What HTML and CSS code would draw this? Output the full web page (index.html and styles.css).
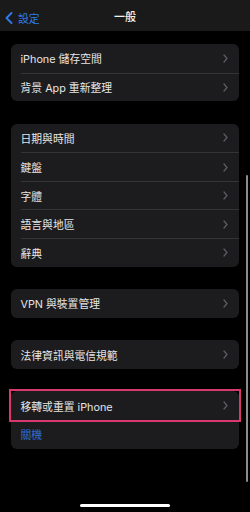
FILE: index.html
```html
<!DOCTYPE html>
<html lang="zh-Hant">
<head>
    <meta charset="UTF-8">
    <meta name="viewport" content="width=device-width, initial-scale=1.0">
    <title>一般</title>
    <link rel="stylesheet" href="styles.css">
</head>
<body>
    <div class="screen">
        <header class="nav">
            <a class="back" href="#">
                <svg class="back-icon" width="8" height="12" viewBox="0 0 8 12"><path d="M6.5 1 L1.5 6 L6.5 11" fill="none" stroke="#2f7cf0" stroke-width="1.8" stroke-linecap="round" stroke-linejoin="round"/></svg>
                <span>設定</span>
            </a>
            <h1 class="title">一般</h1>
        </header>

        <div class="content">
            <div class="group">
                <div class="row"><div class="row-body"><span>iPhone 儲存空間</span><svg class="chev" width="5" height="9" viewBox="0 0 5 9"><path d="M1 1 L4 4.5 L1 8" fill="none" stroke="#5b5b60" stroke-width="1.3" stroke-linecap="round" stroke-linejoin="round"/></svg></div></div>
                <div class="row"><div class="row-body"><span>背景 App 重新整理</span><svg class="chev" width="5" height="9" viewBox="0 0 5 9"><path d="M1 1 L4 4.5 L1 8" fill="none" stroke="#5b5b60" stroke-width="1.3" stroke-linecap="round" stroke-linejoin="round"/></svg></div></div>
            </div>

            <div class="group">
                <div class="row"><div class="row-body"><span>日期與時間</span><svg class="chev" width="5" height="9" viewBox="0 0 5 9"><path d="M1 1 L4 4.5 L1 8" fill="none" stroke="#5b5b60" stroke-width="1.3" stroke-linecap="round" stroke-linejoin="round"/></svg></div></div>
                <div class="row"><div class="row-body"><span>鍵盤</span><svg class="chev" width="5" height="9" viewBox="0 0 5 9"><path d="M1 1 L4 4.5 L1 8" fill="none" stroke="#5b5b60" stroke-width="1.3" stroke-linecap="round" stroke-linejoin="round"/></svg></div></div>
                <div class="row"><div class="row-body"><span>字體</span><svg class="chev" width="5" height="9" viewBox="0 0 5 9"><path d="M1 1 L4 4.5 L1 8" fill="none" stroke="#5b5b60" stroke-width="1.3" stroke-linecap="round" stroke-linejoin="round"/></svg></div></div>
                <div class="row"><div class="row-body"><span>語言與地區</span><svg class="chev" width="5" height="9" viewBox="0 0 5 9"><path d="M1 1 L4 4.5 L1 8" fill="none" stroke="#5b5b60" stroke-width="1.3" stroke-linecap="round" stroke-linejoin="round"/></svg></div></div>
                <div class="row"><div class="row-body"><span>辭典</span><svg class="chev" width="5" height="9" viewBox="0 0 5 9"><path d="M1 1 L4 4.5 L1 8" fill="none" stroke="#5b5b60" stroke-width="1.3" stroke-linecap="round" stroke-linejoin="round"/></svg></div></div>
            </div>

            <div class="group">
                <div class="row"><div class="row-body"><span>VPN 與裝置管理</span><svg class="chev" width="5" height="9" viewBox="0 0 5 9"><path d="M1 1 L4 4.5 L1 8" fill="none" stroke="#5b5b60" stroke-width="1.3" stroke-linecap="round" stroke-linejoin="round"/></svg></div></div>
            </div>

            <div class="group">
                <div class="row"><div class="row-body"><span>法律資訊與電信規範</span><svg class="chev" width="5" height="9" viewBox="0 0 5 9"><path d="M1 1 L4 4.5 L1 8" fill="none" stroke="#5b5b60" stroke-width="1.3" stroke-linecap="round" stroke-linejoin="round"/></svg></div></div>
            </div>

            <div class="group">
                <div class="row highlight"><div class="row-body"><span>移轉或重置 iPhone</span><svg class="chev" width="5" height="9" viewBox="0 0 5 9"><path d="M1 1 L4 4.5 L1 8" fill="none" stroke="#5b5b60" stroke-width="1.3" stroke-linecap="round" stroke-linejoin="round"/></svg></div></div>
                <div class="row"><div class="row-body no-line"><span class="link">關機</span></div></div>
            </div>
        </div>

        <div class="scrollbar"></div>
        <div class="home-bar"></div>
    </div>
</body>
</html>
```

FILE: styles.css
```css
* {
    box-sizing: border-box;
}
body {
    margin: 0;
    background: #000;
    font-family: Inter, "Noto Sans CJK TC", sans-serif;
    color: #e6e6e6;
}
.screen {
    position: relative;
    width: 250px;
    height: 512px;
    overflow: hidden;
    background: #000;
}
.nav {
    position: relative;
    height: 31px;
    background: #1a1a1a;
    display: flex;
    align-items: center;
    justify-content: center;
}
.back {
    position: absolute;
    left: 5px;
    top: 10px;
    display: flex;
    align-items: center;
    gap: 5px;
    color: #2f7cf0;
    text-decoration: none;
    font-size: 10.8px;
}
.title {
    margin: 0;
    font-size: 11px;
    font-weight: 500;
    color: #f2f2f2;
    padding-top: 1px;
}
.content {
    padding: 13px 11px 0 10.5px;
    display: flex;
    flex-direction: column;
    gap: 22.5px;
}
.group {
    background: #1c1c1e;
    border-radius: 6px;
}
.row {
    padding-left: 10px;
}
.row-body {
    height: 28.6px;
    display: flex;
    align-items: center;
    justify-content: space-between;
    padding-right: 11px;
    font-size: 10.8px;
}
.row + .row .row-body {
    border-top: 1px solid #343436;
}
.row + .row .row-body.no-line {
    border-top: none;
}
.chev {
    display: block;
}
.link {
    color: #2f6fd8;
}
.highlight {
    outline: 2px solid #d8386c;
    outline-offset: 0;
}
.scrollbar {
    position: absolute;
    left: 245.5px;
    top: 175px;
    width: 2px;
    height: 307px;
    border-radius: 1px;
    background: #8c8c8c;
}
.home-bar {
    position: absolute;
    left: 80px;
    top: 504px;
    width: 90px;
    height: 2.5px;
    border-radius: 2px;
    background: #fff;
}
```
